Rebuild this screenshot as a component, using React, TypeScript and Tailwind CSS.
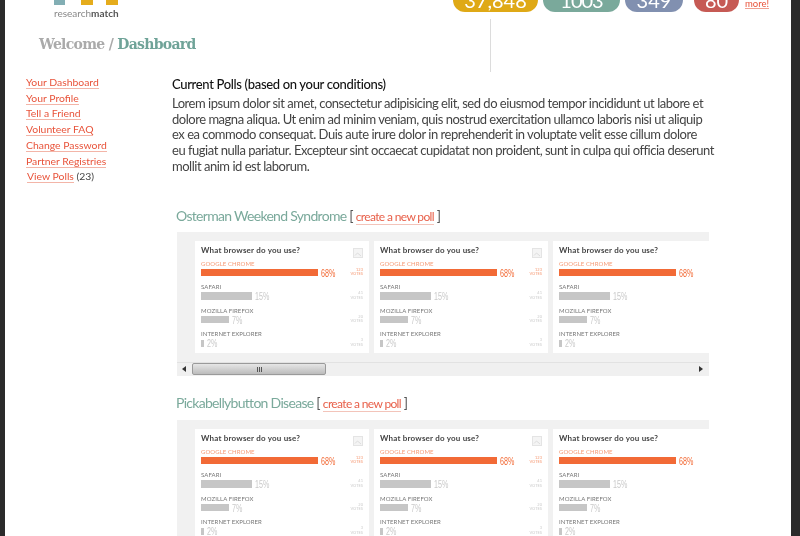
const navLinks = ["Your Dashboard", "Your Profile", "Tell a Friend", "Volunteer FAQ", "Change Password", "Partner Registries"];

const pills = [
  { label: "37,848", cls: "w-[85px] bg-[#dfa916]" },
  { label: "1003", cls: "w-[77px] ml-[5px] bg-[#7aa99b] tracking-[-1px]" },
  { label: "349", cls: "w-[58px] ml-[5px] bg-[#8190b0]" },
  { label: "80", cls: "w-[45px] ml-[11px] bg-[#c65a54]" },
];

const rows = [
  { name: "GOOGLE CHROME", pct: "68%", votes: "123", width: 117 },
  { name: "SAFARI", pct: "15%", votes: "41", width: 51 },
  { name: "MOZILLA FIREFOX", pct: "7%", votes: "20", width: 28 },
  { name: "INTERNET EXPLORER", pct: "2%", votes: "3", width: 3 },
];

function PollCard({ last }: { last?: boolean }) {
  return (
    <div className={`shrink-0 h-[112px] bg-white pl-[6px] pt-[4px] ${last ? "w-[156px]" : "w-[174px]"}`}>
      <div className="flex items-start justify-between pr-[6px] h-[14px]">
        <span className="text-[8px] leading-[11px] font-bold tracking-[0.2px] text-[#444]">What browser do you use?</span>
        {!last && (
          <svg width="10" height="10" viewBox="0 0 10 10" className="mt-[3px]">
            <rect x="0.5" y="0.5" width="9" height="9" fill="#f4f4f4" stroke="#e4e4e4" />
            <path d="M2 7.5 L4.5 5 L8 8" fill="none" stroke="#ddd" />
          </svg>
        )}
      </div>
      {rows.map((r, i) => (
        <div key={r.name} className="h-[23.6px] relative">
          <div className={`text-[6px] leading-[8px] pt-[1px] tracking-[0.08px] ${i === 0 ? "text-[#f59a75]" : "text-[#777]"}`}>{r.name}</div>
          <div className="flex items-center mt-[1px] h-[8px]">
            <div className={`h-[7.5px] ${i === 0 ? "bg-[#f26a36]" : "bg-[#c6c6c6]"}`} style={{ width: r.width }} />
            <span className={`ml-[3px] text-[11px] leading-[8px] font-['Liberation_Sans',sans-serif] inline-block origin-left scale-x-[0.65] ${i === 0 ? "text-[#f26a36]" : "text-[#c9c9c9]"}`}>{r.pct}</span>
          </div>
          {!last && (
            <div className={`absolute right-[6px] top-[9px] text-right text-[4px] leading-[4.5px] ${i === 0 ? "text-[#f59a75]" : "text-[#ccc]"}`}>
              {r.votes}
              <br />
              VOTES
            </div>
          )}
        </div>
      ))}
    </div>
  );
}

function PollStrip({ scrollbar }: { scrollbar?: boolean }) {
  return (
    <div className="w-[532px] ml-[5px] bg-[#f1f1f1] shrink-0">
      <div className="flex gap-[5px] pl-[18px] pt-[9px] pb-[9px] overflow-hidden">
        <PollCard />
        <PollCard />
        <PollCard last />
      </div>
      {scrollbar && (
        <div className="h-[14px] flex items-center border-t border-[#e2e2e2] bg-[#f0f0f0] pl-[5px] pr-[6px]">
          <span className="w-0 h-0 border-y-[3px] border-y-transparent border-r-[4px] border-r-[#333]" />
          <div className="ml-[6px] w-[134px] h-[12px] rounded-[2px] border border-[#9a9a9a] bg-gradient-to-b from-[#e6e6e6] to-[#bcbcbc] flex items-center justify-center gap-[1px]">
            <span className="w-px h-[5px] bg-[#555]" />
            <span className="w-px h-[5px] bg-[#555]" />
            <span className="w-px h-[5px] bg-[#555]" />
          </div>
          <span className="ml-auto w-0 h-0 border-y-[3px] border-y-transparent border-l-[4px] border-l-[#333]" />
        </div>
      )}
    </div>
  );
}

function SectionTitle({ name, className }: { name: string; className: string }) {
  return (
    <div className={`ml-[4px] text-[14px] leading-[18px] tracking-[-0.7px] text-[#7aa99b] whitespace-nowrap ${className}`}>
      {name} <span className="text-[#555]">[ </span>
      <span className="text-[12px] tracking-[-0.65px] text-[#e8604a] border-b border-[#f3c4ba]">create a new poll</span>
      <span className="text-[#555]"> ]</span>
    </div>
  );
}

export default function App() {
  return (
    <div className="w-[800px] h-[536px] overflow-hidden bg-[#2b2b2b] font-['Lato',sans-serif]">
      <div className="ml-[5px] w-[786px] h-[536px] bg-white overflow-hidden blur-[0.4px]">
        {/* top strip: logo and counters, cut off by the window */}
        <div className="flex h-[72px]">
          <div className="w-[485px] shrink-0">
            <div className="flex h-[19px] items-start">
              <div className="ml-[49px] w-[65px]">
                <div className="flex h-[5px]">
                  <span className="w-[11px] bg-[#82aeb4]" />
                  <span className="w-[12px] ml-[16px] bg-[#e5ac1c]" />
                  <span className="w-[12px] ml-[13px] bg-[#e5ac1c]" />
                </div>
                <div className="text-[10px] leading-[11px] mt-[3px] text-[#888] whitespace-nowrap">
                  research<b className="text-[#555]">match</b>
                </div>
              </div>
            </div>
            <div className="ml-[34px] mt-[15px] font-['DejaVu_Serif',serif] font-bold text-[14px] leading-[20px] tracking-[-0.7px] text-[#aaa] whitespace-nowrap">
              Welcome / <span className="text-[#6fa398]">Dashboard</span>
            </div>
          </div>
          <div className="w-px h-[53px] mt-[19px] bg-[#dcdcdc] shrink-0" />
          <div className="flex items-start h-[12px] -ml-[38px] relative">
            {pills.map((p) => (
              <div key={p.label} className={`${p.cls} h-[12px] rounded-b-[12px] flex items-end justify-center overflow-hidden shrink-0`}>
                <span className="text-[20px] leading-[23px] text-white">{p.label}</span>
              </div>
            ))}
            <span className="ml-[6px] text-[9.5px] leading-[8px] text-[#e8533a] border-b border-[#f0a090]">more!</span>
          </div>
        </div>

        <div className="flex">
          <nav className="w-[167px] shrink-0 pl-[21px] pt-[3px] text-[10.4px] leading-[15.7px]">
            {navLinks.map((l) => (
              <div key={l}>
                <span className="text-[#e8533a] border-b border-[#f3b5a8]">{l}</span>
              </div>
            ))}
            <div className="pl-[1px] text-[#444]">
              <span className="text-[#e8533a] border-b border-[#f3b5a8]">View Polls</span> (23)
            </div>
          </nav>

          <main className="min-w-0 flex-1 flex flex-col">
            <h2 className="text-[13px] leading-[16px] pt-[4px] font-medium text-[#111] tracking-[-0.33px]">Current Polls (based on your conditions)</h2>
            <p className="text-[13px] leading-[15.7px] mt-[4px] text-[#444] tracking-[-0.48px] whitespace-nowrap">
              Lorem ipsum dolor sit amet, consectetur adipisicing elit, sed do eiusmod tempor incididunt ut labore et
              <br />
              dolore magna aliqua. Ut enim ad minim veniam, quis nostrud exercitation ullamco laboris nisi ut aliquip
              <br />
              ex ea commodo consequat. Duis aute irure dolor in reprehenderit in voluptate velit esse cillum dolore
              <br />
              eu fugiat nulla pariatur. Excepteur sint occaecat cupidatat non proident, sunt in culpa qui officia deserunt
              <br />
              mollit anim id est laborum.
            </p>
            <SectionTitle name="Osterman Weekend Syndrome" className="mt-[32px]" />
            <div className="mt-[6px]">
              <PollStrip scrollbar />
            </div>
            <SectionTitle name="Pickabellybutton Disease" className="mt-[18px]" />
            <div className="mt-[7px]">
              <PollStrip />
            </div>
          </main>
        </div>
      </div>
    </div>
  );
}
